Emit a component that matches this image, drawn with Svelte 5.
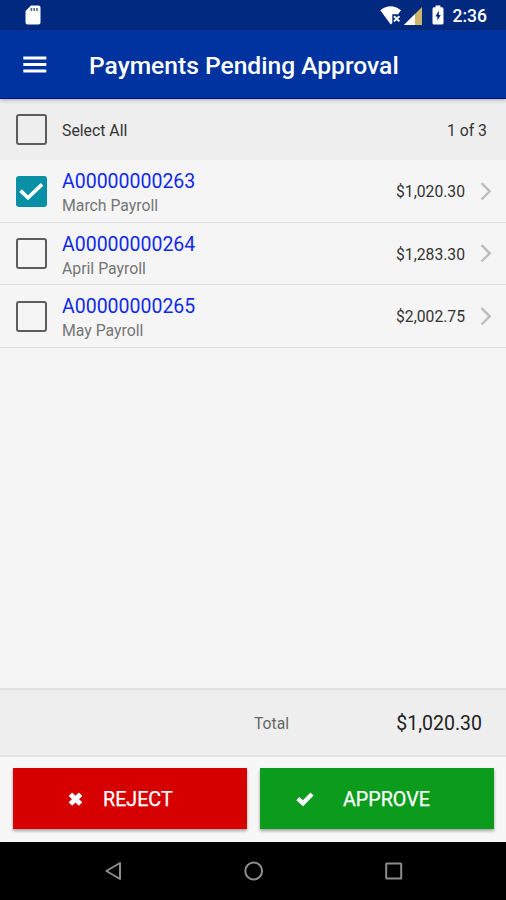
<script>
  let payments = $state([
    { id: 'A00000000263', name: 'March Payroll', amount: 1020.3, selected: true },
    { id: 'A00000000264', name: 'April Payroll', amount: 1283.3, selected: false },
    { id: 'A00000000265', name: 'May Payroll', amount: 2002.75, selected: false }
  ]);

  let selected = $derived(payments.filter((p) => p.selected));
  let total = $derived(selected.reduce((sum, p) => sum + p.amount, 0));
  let allSelected = $derived(selected.length === payments.length);

  function money(value) {
    return '$' + value.toLocaleString('en-US', { minimumFractionDigits: 2 });
  }

  function toggleAll() {
    const next = !allSelected;
    payments.forEach((p) => (p.selected = next));
  }
</script>

{#snippet checkbox(checked, label, toggle)}
  <button class="checkbox" class:checkbox--on={checked} role="checkbox" aria-checked={checked} aria-label={label} onclick={toggle}>
    {#if checked}
      <svg width="31" height="31" viewBox="0 0 31 31">
        <path d="M4.6 14.6 L12 21.8 L26 8.4" fill="none" stroke="#fff" stroke-width="3.6" />
      </svg>
    {/if}
  </button>
{/snippet}

<div class="screen">
  <div class="status">
    <svg class="status__card" width="16" height="20" viewBox="0 0 16 20">
      <path d="M6 0.5 H13.5 Q15.5 0.5 15.5 2.5 V17.5 Q15.5 19.5 13.5 19.5 H2.5 Q0.5 19.5 0.5 17.5 V6 Z" fill="#fff" />
      <path d="M6.4 3 V6 M9.2 3 V6 M12 3 V6" stroke="#4d659f" stroke-width="1.6" />
    </svg>
    <svg class="status__wifi" width="22" height="19" viewBox="0 0 22 19">
      <path d="M0.3 4.2 Q10.5 -3.6 21 4.2 L18.2 8.2 H12.3 V17 L10.7 18.4 Z" fill="#fff" />
      <path d="M14 10.2 L19.4 15.4 M19.4 10.2 L14 15.4" stroke="#fff" stroke-width="2" />
    </svg>
    <svg class="status__signal" width="18" height="18" viewBox="0 0 18 18">
      <path d="M0 18 L18 0 V18 Z" fill="#cdb66b" />
      <path d="M0 18 L11 7 V18 Z" fill="#fff" />
    </svg>
    <svg class="status__battery" width="12" height="20" viewBox="0 0 12 20">
      <path d="M3.6 0.5 H8.4 V2.3 H10 Q11.5 2.3 11.5 4 V18 Q11.5 19.5 10 19.5 H2 Q0.5 19.5 0.5 18 V4 Q0.5 2.3 2 2.3 H3.6 Z" fill="#fff" />
      <path d="M6.8 5.5 L3.4 11.4 H5.4 V15.6 L8.8 9.9 H6.8 Z" fill="#00297f" />
    </svg>
    <span class="status__time">2:36</span>
  </div>

  <header class="appbar">
    <button class="appbar__menu" aria-label="Menu">
      <svg width="24" height="18" viewBox="0 0 24 18">
        <path d="M0.3 2 H23.3 M0.3 8.5 H23.3 M0.3 15 H23.3" stroke="#fff" stroke-width="2.8" />
      </svg>
    </button>
    <h1>Payments Pending Approval</h1>
  </header>

  <div class="select-all">
    {@render checkbox(allSelected, 'Select all', toggleAll)}
    <span class="select-all__label">Select All</span>
    <span class="select-all__count">{selected.length} of {payments.length}</span>
  </div>

  <ul class="list">
    {#each payments as payment (payment.id)}
      <li class="row">
        {@render checkbox(payment.selected, payment.name, () => (payment.selected = !payment.selected))}
        <div class="row__text">
          <span class="row__id">{payment.id}</span>
          <span class="row__name">{payment.name}</span>
        </div>
        <span class="row__amount">{money(payment.amount)}</span>
        <svg class="row__chevron" width="12" height="19" viewBox="0 0 12 19">
          <path d="M1.5 1.1 L9.7 9.3 L1.5 17.5" fill="none" stroke="#bdbdbd" stroke-width="2.4" />
        </svg>
      </li>
    {/each}
  </ul>

  <div class="total">
    <span class="total__label">Total</span>
    <span class="total__value">{money(total)}</span>
  </div>

  <div class="actions">
    <button class="action action--reject">
      <svg width="15" height="15" viewBox="0 0 15 15">
        <path d="M2.4 2.2 L12.6 12 M12.6 2.2 L2.4 12" stroke="#fff" stroke-width="5" />
      </svg>
      <span>REJECT</span>
    </button>
    <button class="action action--approve">
      <svg width="18" height="15" viewBox="0 0 18 15">
        <path d="M1.8 6.6 L7 11.2 L16 2" fill="none" stroke="#fff" stroke-width="4.4" />
      </svg>
      <span>APPROVE</span>
    </button>
  </div>

  <nav class="navbar">
    <svg width="18" height="20" viewBox="0 0 18 20">
      <path d="M15 2 V18 L1.4 10 Z" fill="none" stroke="#8c8c8c" stroke-width="2" stroke-linejoin="round" />
    </svg>
    <svg width="20" height="20" viewBox="0 0 20 20">
      <circle cx="9.7" cy="10" r="8.4" fill="none" stroke="#8c8c8c" stroke-width="2" />
    </svg>
    <svg width="18" height="18" viewBox="0 0 18 18">
      <rect x="1.2" y="1.5" width="15" height="15" rx="0.5" fill="none" stroke="#8c8c8c" stroke-width="2" />
    </svg>
  </nav>
</div>

<style>
  :global(body) {
    margin: 0;
  }

  .screen {
    display: flex;
    flex-direction: column;
    width: 506px;
    height: 900px;
    overflow: hidden;
    background: #f5f5f5;
    color: #333;
    font-family: Roboto, sans-serif;
  }

  button {
    padding: 0;
    border: 0;
    background: none;
    font: inherit;
    color: inherit;
  }

  svg {
    display: block;
    flex: none;
  }

  .status {
    display: flex;
    align-items: center;
    flex: none;
    box-sizing: border-box;
    height: 30px;
    padding: 0 19px 0 25px;
    background: #00297f;
    color: #fff;
  }

  .status__wifi {
    margin-left: auto;
  }

  .status__signal {
    margin: 1px 0 0 2px;
  }

  .status__battery {
    margin: 0 9px 0 10px;
  }

  .status__time {
    font-size: 17.5px;
    font-weight: 500;
    line-height: 30px;
    padding-top: 2px;
  }

  .appbar {
    display: flex;
    align-items: center;
    flex: none;
    box-sizing: border-box;
    height: 69px;
    padding: 2px 0 0 23px;
    background: #0033a0;
    border-bottom: 1px solid #00128a;
    box-shadow: 0 1px 4px rgba(0, 0, 0, 0.3);
    z-index: 1;
  }

  h1 {
    margin: 2px 0 0 42px;
    color: #fff;
    font-size: 24.6px;
    font-weight: 500;
    line-height: 32px;
    white-space: nowrap;
  }

  .select-all {
    display: flex;
    align-items: center;
    flex: none;
    height: 61px;
    padding: 0 19px 0 16px;
    background: #eee;
    font-size: 15.8px;
  }

  .select-all__label {
    margin-left: 15px;
    padding-top: 2px;
  }

  .select-all__count {
    margin-left: auto;
    padding-top: 2px;
  }

  .checkbox {
    box-sizing: border-box;
    flex: none;
    width: 31px;
    height: 31px;
    border: 2px solid #5c5c5c;
    border-radius: 3px;
  }

  .checkbox--on {
    border: 0;
    background: #0990a5;
  }

  .list {
    flex: 1;
    margin: 0;
    padding: 0;
    list-style: none;
  }

  .row {
    display: flex;
    align-items: center;
    box-sizing: border-box;
    height: 62.6px;
    padding: 1px 14px 0 16px;
    border-bottom: 1.5px solid #dedede;
  }

  .row__text {
    display: flex;
    flex-direction: column;
    margin-left: 15px;
    padding-top: 6px;
  }

  .row__id {
    color: #1029ea;
    font-size: 19.5px;
    line-height: 24px;
  }

  .row__name {
    color: #757575;
    font-size: 15.8px;
    line-height: 24px;
  }

  .row__amount {
    margin-left: auto;
    padding-top: 1px;
    font-size: 15.7px;
  }

  .row__chevron {
    margin-left: 15px;
  }

  .total {
    display: flex;
    align-items: center;
    flex: none;
    box-sizing: border-box;
    height: 69px;
    padding: 2px 24px 0 254px;
    background: #eee;
    border-top: 2px solid #e2e2e2;
    border-bottom: 2px solid #e4e4e4;
  }

  .total__label {
    color: #666;
    font-size: 15.7px;
  }

  .total__value {
    margin-left: auto;
    color: #222;
    font-size: 19.5px;
  }

  .actions {
    display: grid;
    flex: none;
    grid-template-columns: 1fr 1fr;
    gap: 13px;
    box-sizing: border-box;
    height: 84.5px;
    padding: 11px 12px 13px 13px;
    background: #f7f7f7;
  }

  .action {
    display: flex;
    align-items: center;
    box-sizing: border-box;
    padding-top: 2px;
    color: #fff;
    font-size: 19.7px;
    -webkit-text-stroke: 0.25px #fff;
    box-shadow: 0 2px 3px rgba(0, 0, 0, 0.35);
  }

  .action--reject {
    gap: 20px;
    padding-left: 55px;
    background: #d60000;
  }

  .action--approve {
    gap: 29px;
    padding-left: 36px;
    background: #0b9c1e;
  }

  .navbar {
    display: flex;
    align-items: center;
    justify-content: space-between;
    flex: none;
    box-sizing: border-box;
    height: 58.5px;
    padding: 0 103px 0 105px;
    background: #000;
  }
</style>
